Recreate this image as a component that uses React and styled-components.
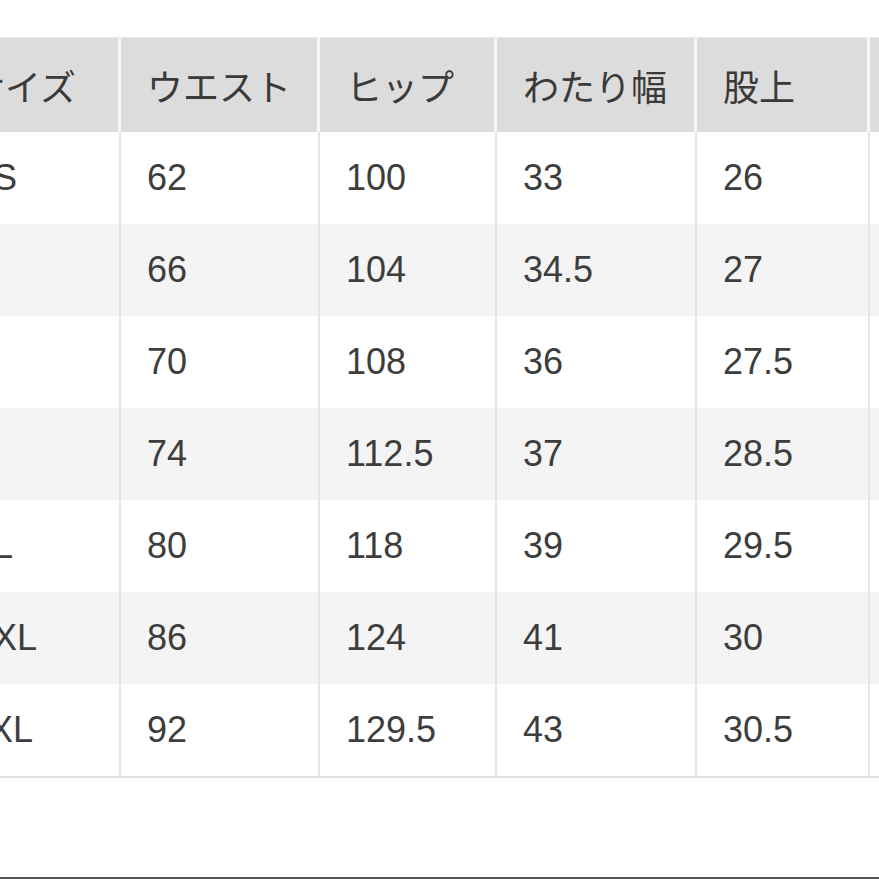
import React from 'react';
import styled, { createGlobalStyle } from 'styled-components';

const GlobalStyle = createGlobalStyle`
    html, body {
        margin: 0;
        padding: 0;
        background: #ffffff;
        overflow: hidden;
    }
`;

const Page = styled.div`
    width: 879px;
    height: 879px;
    display: flex;
    flex-direction: column;
    overflow: hidden;
    font-family: "Liberation Sans", "Noto Sans CJK JP", sans-serif;
    color: #3d3d3d;
`;

const Table = styled.div`
    margin-top: 37px;
    margin-left: -57px;
    display: grid;
    grid-template-columns: 178px 199px 177px 200px 173px 120px;
    border-top: 1px solid #e9e9e9;
    border-bottom: 2px solid #e0e0e0;
`;

const HeadCell = styled.div`
    box-sizing: border-box;
    height: 94px;
    display: flex;
    align-items: center;
    padding-left: 26px;
    background: #dcdcdc;
    border-right: 3px solid #f7f7f7;
    font-size: 36px;
    white-space: nowrap;
    color: #3a3a3a;
`;

const Cell = styled.div`
    box-sizing: border-box;
    height: 92px;
    display: flex;
    align-items: center;
    padding-left: 26px;
    background: ${(p) => (p.$alt ? '#f4f4f4' : '#ffffff')};
    border-right: 2px solid #e4e4e4;
    font-size: 36px;
    white-space: nowrap;
`;

const BottomLine = styled.div`
    margin-top: auto;
    height: 2px;
    background: #555555;
`;

const headers = ['サイズ', 'ウエスト', 'ヒップ', 'わたり幅', '股上', ''];

const rows = [
    ['XS', '62', '100', '33', '26', ''],
    ['S', '66', '104', '34.5', '27', ''],
    ['M', '70', '108', '36', '27.5', ''],
    ['L', '74', '112.5', '37', '28.5', ''],
    ['XL', '80', '118', '39', '29.5', ''],
    ['XXL', '86', '124', '41', '30', ''],
    ['3XL', '92', '129.5', '43', '30.5', ''],
];

function App() {
    return (
        <Page>
            <GlobalStyle />
            <Table>
                {headers.map((h, i) => (
                    <HeadCell key={'h' + i}>{h}</HeadCell>
                ))}
                {rows.map((row, r) =>
                    row.map((v, c) => (
                        <Cell key={r + '-' + c} $alt={r % 2 === 1}>
                            {v}
                        </Cell>
                    ))
                )}
            </Table>
            <BottomLine />
        </Page>
    );
}

export default App;
